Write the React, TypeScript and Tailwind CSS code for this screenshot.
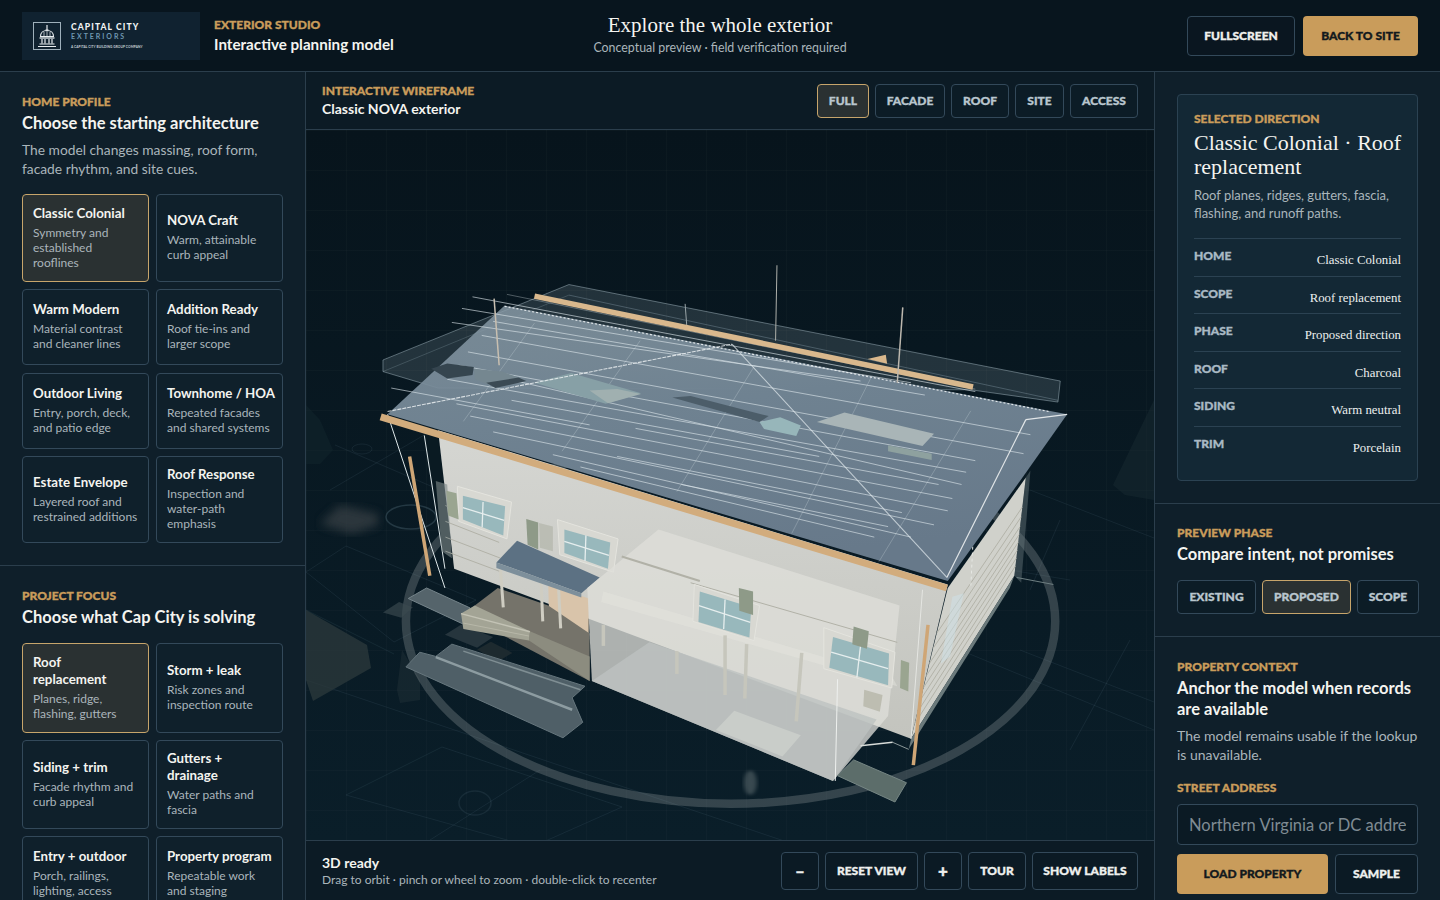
import type { ReactNode } from 'react'

const profiles = [
  { title: 'Classic Colonial', desc: 'Symmetry and established rooflines', active: true, h: 'h-[88px]' },
  { title: 'NOVA Craft', desc: 'Warm, attainable curb appeal', h: 'h-[88px]' },
  { title: 'Warm Modern', desc: 'Material contrast and cleaner lines', h: 'h-[76px]' },
  { title: 'Addition Ready', desc: 'Roof tie-ins and larger scope', h: 'h-[76px]' },
  { title: 'Outdoor Living', desc: 'Entry, porch, deck, and patio edge', h: 'h-[76px]' },
  { title: 'Townhome / HOA', desc: 'Repeated facades and shared systems', h: 'h-[76px]' },
  { title: 'Estate Envelope', desc: 'Layered roof and restrained additions', h: 'h-[87px]' },
  { title: 'Roof Response', desc: 'Inspection and water-path emphasis', h: 'h-[87px]' },
]

const focuses = [
  { title: 'Roof\nreplacement', desc: 'Planes, ridge, flashing, gutters', active: true, h: 'h-[90px]' },
  { title: 'Storm + leak', desc: 'Risk zones and inspection route', h: 'h-[90px]' },
  { title: 'Siding + trim', desc: 'Facade rhythm and curb appeal', h: 'h-[89px]' },
  { title: 'Gutters +\ndrainage', desc: 'Water paths and fascia', h: 'h-[89px]' },
  { title: 'Entry + outdoor', desc: 'Porch, railings, lighting, access', h: 'h-[76px]' },
  { title: 'Property program', desc: 'Repeatable work and staging', h: 'h-[76px]' },
]

const specs = [
  ['HOME', 'Classic Colonial'],
  ['SCOPE', 'Roof replacement'],
  ['PHASE', 'Proposed direction'],
  ['ROOF', 'Charcoal'],
  ['SIDING', 'Warm neutral'],
  ['TRIM', 'Porcelain'],
]

const heavy = 'font-black [-webkit-text-stroke:0.35px_currentColor]'

function Eyebrow({ children }: { children: ReactNode }) {
  return <div className={`text-[12px] leading-[15px] text-[#c99c5b] uppercase ${heavy}`}>{children}</div>
}

function OptionCard({ title, desc, active, h }: { title: string; desc: string; active?: boolean; h: string }) {
  return (
    <div
      className={`${h} flex flex-col justify-center rounded border pr-[7px] pb-[2px] pl-[10px] ${
        active ? 'border-[#c7a56b] bg-[#2a3132]' : 'border-[#33495a] bg-[#0f202b]'
      }`}
    >
      <div className="text-[13.300px] leading-[17px] font-bold whitespace-pre text-[#f4f4f0]">{title}</div>
      <div className="mt-[3px] text-[12px] leading-[15px] text-[#aab5bb]">{desc}</div>
    </div>
  )
}

function ToolButton({ children, active, className = '' }: { children: ReactNode; active?: boolean; className?: string }) {
  return (
    <div
      className={`flex h-[34px] shrink-0 items-center justify-center rounded border text-[12px] ${heavy} ${
        active ? 'border-[#c7a56b] bg-[#2a3132]' : 'border-[#33495a] bg-[#0c1c26]'
      } text-[#b9c6ce] ${className}`}
    >
      {children}
    </div>
  )
}

function BottomButton({ children, className = '' }: { children: ReactNode; className?: string }) {
  return (
    <div className={`flex h-[38px] items-center justify-center rounded border border-[#33495a] bg-[#0b1a24] text-[12px] text-[#eef0ee] ${heavy} ${className}`}>
      {children}
    </div>
  )
}

function Logo() {
  return (
    <div className="flex h-[48px] w-[178px] items-center gap-[10px] bg-[#102230] pl-[11px]">
      <svg width="28" height="28" viewBox="0 0 28 28" fill="none" stroke="#e8edf0" className="shrink-0">
        <rect x="0.5" y="0.5" width="27" height="27" stroke="#9fb0bb" />
        <path d="M14 3v5" strokeWidth="1.2" />
        <path d="M12.500 8h3" strokeWidth="1" />
        <path d="M7.500 14.500C7.500 11 10 8.500 14 8.500s6.500 2.500 6.500 6z" strokeWidth="1.100" />
        <path d="M11 14V10M14 14V9M17 14V10" strokeWidth="0.700" />
        <path d="M6.500 16h15" strokeWidth="1.300" />
        <path d="M9 17v4.500M12 17v4.500M16 17v4.500M19 17v4.500" strokeWidth="1.200" />
        <path d="M6.500 22h15M5 24.500h18" strokeWidth="1.100" />
      </svg>
      <div>
        <div className="text-[8.500px] leading-[10px] font-black tracking-[0.13em] text-[#f2f4f4]">CAPITAL CITY</div>
        <div className="text-[7px] leading-[9px] font-bold tracking-[0.28em] text-[#6f97b0]">EXTERIORS</div>
        <div className="mt-[4px] text-[3.200px] leading-[5px] font-bold tracking-[0.03em] whitespace-nowrap text-[#c9d2d8]">A CAPITAL CITY BUILDING GROUP COMPANY</div>
      </div>
    </div>
  )
}

const poly = (points: string, fill: string, stroke = 'none', sw = 1) => (
  <polygon points={points} fill={fill} stroke={stroke} strokeWidth={sw} vectorEffect="non-scaling-stroke" />
)

const seg = (a: number[], stroke: string, sw = 1, dash?: string) => (
  <line x1={a[0]} y1={a[1]} x2={a[2]} y2={a[3]} stroke={stroke} strokeWidth={sw} strokeDasharray={dash} vectorEffect="non-scaling-stroke" />
)

// roof courses, [start x, start y, end x, end y] in the house's own drawing space
const roofLines = [
  [245, 105, 1340, 375],
  [222, 138, 1200, 350],
  [200, 178, 1090, 345],
  [290, 175, 1230, 385],
  [265, 215, 1460, 498],
  [235, 262, 1445, 552],
  [68, 365, 500, 470],
  [215, 300, 1340, 572],
  [190, 340, 1320, 605],
  [340, 345, 1310, 640],
  [210, 410, 1290, 680],
  [240, 445, 1280, 715],
  [290, 490, 1250, 755],
  [420, 555, 1200, 790],
  [480, 590, 1120, 790],
  [330, 400, 1000, 560],
  [600, 480, 1260, 640],
  [560, 560, 1180, 720],
  [700, 640, 1150, 760],
]

const roofRibs = [
  [225, 460, 380, 180],
  [440, 545, 610, 230],
  [690, 660, 860, 300],
  [940, 780, 1115, 330],
  [1130, 860, 1330, 430],
]

// siding courses on the far wall, as a share of its height
const farCourses = [0.3, 0.4, 0.5, 0.58, 0.66, 0.74, 0.82, 0.9]

function Window({ frame, glass, cross }: { frame: string; glass: string; cross: number[][] }) {
  return (
    <>
      {poly(frame, '#d8d8d2', '#e4e4de', 1)}
      {poly(glass, '#98b8bc')}
      {cross.map((c, i) => (
        <g key={i}>{seg(c, '#e6eeee', 1.300)}</g>
      ))}
    </>
  )
}

function House() {
  return (
    <svg className="absolute inset-0 h-full w-full" viewBox="306 130 848 710" preserveAspectRatio="none">
      <defs>
        <filter id="soft">
          <feGaussianBlur stdDeviation="5" />
        </filter>
        <linearGradient id="roofFill" x1="0" y1="0" x2="0.3" y2="1">
          <stop offset="0" stopColor="#8fa1ad" stopOpacity="0.78" />
          <stop offset="0.45" stopColor="#6f8291" />
          <stop offset="1" stopColor="#67798a" />
        </linearGradient>
        <linearGradient id="wallFill" x1="0" y1="0" x2="0" y2="1">
          <stop offset="0" stopColor="#d5d6d2" />
          <stop offset="1" stopColor="#c3c4be" />
        </linearGradient>
      </defs>

      {/* faint site plan */}
      <g fill="none" stroke="#8fb4c4" strokeOpacity="0.09">
        <ellipse cx="411" cy="517" rx="25" ry="12" strokeOpacity="0.2" strokeWidth="1.500" />
        <ellipse cx="475" cy="803" rx="16" ry="12" strokeOpacity="0.1" strokeWidth="1.500" />
        <ellipse cx="362" cy="449" rx="10" ry="5" />
        <path d="M306 572l40-26 130 54-82 42zM306 610l88 44" />
        <path d="M346 795l96-48 180 60-90 40z" />
        <path d="M335 445l140 60M330 490l120-70M306 680L900 880M1020 650l134 52M1030 490l124 48M1060 520l-30 70" />
        <path d="M1010 570l60 10M960 650l194 80M1130 640l-60 110M430 840l110-70" />
      </g>
      <polygon points="320,524 340,505 378,514 378,525 352,534" fill="#3b4347" filter="url(#soft)" opacity="0.7" />
      <polygon points="306,610 367,645 371,668 313,701 306,680" fill="#2c3a3c" opacity="0.75" />
      <polygon points="306,405 320,420 333,450 320,464 306,464" fill="#15282f" opacity="0.45" />
      <polygon points="1154,400 1113,485 1125,495 1154,500" fill="#1a2c33" opacity="0.45" />
      <polygon points="402,650 420,680 420,700 400,703 397,690" fill="#24343a" opacity="0.45" />

      <g transform="matrix(.4592 0 0 .3508 360 260)">
        <ellipse cx="807" cy="1030" rx="707" ry="520" fill="none" stroke="#a5aeac" strokeOpacity="0.28" strokeWidth="8.500" vectorEffect="non-scaling-stroke" />
        <ellipse cx="850" cy="1490" rx="14" ry="35" fill="#a5aeac" opacity="0.3" filter="url(#soft)" />
        {poly('50,285 50,318 170,365 1330,370 1520,405 1525,345 455,70', '#c3d6e026', '#c3d6e066')}
        {seg([50, 318, 455, 100], '#b9d0dc33')}
        {seg([455, 100, 1520, 400], '#b9d0dc44')}
        {seg([320, 98, 1340, 368], '#dbe3e655')}
        {seg([708, 125, 712, 195], '#9aa5a8')}

        {/* left ghost wall */}
        {poly('140,495 170,510 210,885 185,880', '#0a1a22')}
        {seg([60, 440, 185, 935], '#dfe8ea', 1)}
        {seg([140, 500, 185, 880], '#dfe8ea', 1)}

        {/* walkway slabs */}
        {poly('105,965 145,935 240,992 225,1038', '#55646b', '#75848a')}
        {poly('50,1005 85,975 115,990 90,1020', '#3b4a50aa')}
        {poly('185,1068 220,1040 290,1075 255,1105', '#26353d')}
        {poly('255,1110 285,1088 332,1120 300,1145', '#1d2a2f')}
        {poly('200,1095 490,1215 462,1248 485,1318 442,1362 100,1160 130,1118 165,1130', '#4f5f67', '#66767d')}
        {seg([165, 1132, 462, 1282], '#8d9ca1', 2.500)}
        {seg([225, 1115, 480, 1225], '#7f8e93', 1.500)}

        {/* far wall */}
        {poly('1280,935 1450,620 1425,900 1200,1365', '#d0d1cb')}
        {poly('1200,1365 1425,900 1415,935 1195,1395', '#6b7a7c')}
        {farCourses.map((t) => (
          <g key={t}>{seg([1280 - 80 * t, 935 + 430 * t, 1450 - 25 * t, 620 + 280 * t], '#b3b3a9', 1)}</g>
        ))}
        {poly('1290,960 1315,950 1285,1130 1265,1150', '#cfe1e688')}
        {poly('1450,620 1460,600 1440,920 1425,900', '#67757a77')}
        {seg([1335, 800, 1330, 935], '#e6e8e4', 1, '3 3')}
        {seg([1430, 905, 1510, 925], '#6f7f82', 1)}

        {/* front wall */}
        {poly('170,485 1280,925 1200,1365 205,880', 'url(#wallFill)')}
        {[700, 745, 790, 830].map((y, i) => (
          <g key={y}>{seg([186, y, 300 + i * 3, y + 60], '#b2b2a8', 1)}</g>
        ))}
        {poly('165,630 190,640 200,850 178,830', '#7f8a8b99')}

        <Window
          frame="212,645 330,690 320,795 215,745"
          glass="224,672 316,702 312,785 224,740"
          cross={[[268, 690, 266, 762], [224, 706, 314, 742]]}
        />
        <Window
          frame="430,740 562,795 552,890 435,840"
          glass="445,768 545,805 540,880 445,835"
          cross={[[492, 785, 490, 858], [445, 802, 542, 842]]}
        />
        {poly('188,658 210,665 215,740 192,728', '#9aa590')}
        {poly('362,738 388,748 388,825 365,812', '#8e9a88')}
        {poly('390,750 420,760 420,830 392,820', '#a8ada088')}

        {/* entry */}
        {poly('410,925 498,965 498,1068 412,1032', '#d9c4aa')}
        {poly('300,935 410,985 500,1065 500,1200 225,1010', '#75736a')}
        {poly('370,1058 500,1130 500,1200 368,1085', '#8c8c7f')}
        {poly('220,1008 250,985 370,1058 368,1085 225,1052', '#a3a495')}
        {seg([225, 1035, 368, 1072], '#b7b7a8', 1)}
        {seg([220, 1008, 370, 1060], '#c3c3b5', 1.500)}
        {[[305, 865, 312, 990], [394, 905, 398, 1030], [432, 925, 437, 1050]].map((p) => (
          <g key={p[0]}>{seg(p, '#cfcdc2', 3)}</g>
        ))}
        {poly('297,862 342,800 522,905 482,950', '#5c7183')}
        {poly('297,862 482,950 482,962 297,878', '#7d8f9b')}

        {/* translucent addition */}
        {poly('495,935 650,768 1175,985 1150,1300 1030,1485 505,1200', '#dedfd9c4')}
        {poly('505,1200 630,1090 1125,1310 1030,1485', '#bdc2c0cc')}
        {poly('775,1340 815,1285 960,1355 920,1415', '#c9cdc9')}
        {poly('530,945 1160,1190 1170,1215 525,975', '#e5e5df77')}
        {seg([720, 920, 1170, 1090], '#b1b1a7', 1)}
        {seg([570, 845, 740, 915], '#b1b1a7', 2)}

        <Window
          frame="728,925 870,985 858,1085 725,1030"
          glass="740,945 852,990 848,1076 737,1032"
          cross={[[795, 968, 792, 1052], [738, 985, 850, 1033]]}
        />
        <Window
          frame="1010,1048 1165,1118 1158,1220 1010,1165"
          glass="1030,1075 1152,1122 1150,1212 1022,1162"
          cross={[[1090, 1100, 1082, 1190], [1026, 1118, 1150, 1165]]}
        />
        {poly('825,935 856,945 856,1012 826,1000', '#8e9a88')}
        {poly('1075,1045 1108,1058 1104,1108 1072,1095', '#8e9a88')}
        {poly('1178,1140 1196,1148 1194,1230 1176,1220', '#9aa590')}
        {poly('1098,1225 1138,1240 1132,1288 1096,1272', '#bdbdb1')}

        {[[530, 1040, 530, 1100], [690, 1115, 690, 1180], [795, 1070, 795, 1240], [842, 1095, 838, 1250], [962, 1120, 950, 1315]].map((p) => (
          <g key={p[0]}>{seg(p, '#c6c6bc', 3.500)}</g>
        ))}
        {seg([1040, 1195, 1035, 1485], '#eef0ee', 1)}
        {seg([1225, 940, 1200, 1365], '#e5e6e2', 1)}
        {seg([1090, 1385, 1160, 1375], '#d8dcd9', 1.500)}
        {seg([1160, 1375, 1195, 1395], '#8b9798', 1)}
        {poly('1040,1470 1075,1425 1190,1490 1165,1545', '#5c6d6a', '#768684')}

        {/* roof */}
        {poly('60,440 315,130 1540,440 1440,625 1280,915', 'url(#roofFill)')}
        {roofRibs.map((r) => (
          <g key={r[0]}>{seg(r, '#d5e0e544', 1)}</g>
        ))}
        {roofLines.map((r) => (
          <g key={r[1]}>{seg(r, '#dce6eaa0', 1)}</g>
        ))}
        {poly('155,310 190,295 248,305 245,328 190,338', '#35454f')}
        {poly('248,310 310,318 345,335 290,360 250,340', '#758790')}
        {poly('275,350 345,335 362,345 295,365', '#3b4a54')}
        {poly('380,350 460,322 612,380 535,410', '#87a0a6')}
        {poly('500,372 560,368 612,382 540,408', '#a0b0b0')}
        {poly('680,392 720,388 890,445 870,462', '#4c5d69')}
        {poly('870,462 915,448 960,472 950,502 880,482', '#97b6ba')}
        {poly('995,462 1055,435 1250,495 1225,530', '#a9b5b7')}
        {poly('1150,528 1245,552 1245,570 1150,545', '#8ea19f')}
        {seg([315, 132, 1500, 432], '#f1f5f6dd', 1.200, '2 2')}
        {seg([60, 432, 810, 240], '#f1f5f6cc', 1.100, '4 1')}
        {seg([810, 240, 1278, 905], '#dfe8ecbb', 1.100)}
        {seg([1450, 455, 1278, 905], '#f4f6f6dd', 1.200)}
        {seg([1450, 455, 1540, 440], '#f4f6f6dd', 1.200)}

        {/* trim and downspouts */}
        {seg([45, 447, 1278, 935], '#d2ac7d', 7)}
        {seg([380, 103, 1335, 362], '#d9b88d', 5.500)}
        {poly('1105,282 1145,270 1148,296', '#d9b88d')}
        {seg([108, 560, 152, 900], '#cfa676', 3.500)}
        {seg([1237, 1040, 1205, 1440], '#cfa676', 3.500)}
        {seg([908, 15, 905, 230], '#aeb0aa', 1)}
        {seg([1182, 135, 1170, 350], '#bdb8ae', 1.500)}
        {seg([292, 110, 303, 300], '#c8bfb0', 1.500)}
      </g>
    </svg>
  )
}

export default function App() {
  return (
    <div className="flex h-[900px] w-[1440px] flex-col overflow-hidden bg-[#0f1f2a] [font-family:Lato,sans-serif] text-white">
      <header className="grid h-[72px] shrink-0 grid-cols-[1fr_auto_1fr] items-center border-b border-[#2b3e4c] bg-[#08151e] px-[22px]">
        <div className="flex items-center">
          <Logo />
          <div className="ml-[14px]">
            <Eyebrow>Exterior Studio</Eyebrow>
            <div className="mt-[2px] text-[15.200px] leading-[20px] font-bold whitespace-nowrap text-[#f4f4f0]">Interactive planning model</div>
          </div>
        </div>
        <div className="pb-[4px] text-center">
          <div className="[font-family:'Liberation_Serif',serif] text-[21px] leading-[26px] text-[#f4f4f0]">Explore the whole exterior</div>
          <div className="mt-[2px] text-[12.400px] leading-[16px] text-[#aab5bb]">Conceptual preview · field verification required</div>
        </div>
        <div className="flex justify-end gap-2">
          <div className={`flex h-[40px] w-[108px] items-center justify-center rounded border border-[#33495a] bg-[#0a1620] text-[12px] text-[#f0f0ec] ${heavy}`}>FULLSCREEN</div>
          <div className={`flex h-[40px] w-[115px] items-center justify-center rounded bg-[#c99c5b] text-[12px] text-[#13191d] ${heavy}`}>BACK TO SITE</div>
        </div>
      </header>

      <div className="flex min-h-0 flex-1">
        <aside className="w-[306px] shrink-0 overflow-hidden border-r border-[#2b3e4c]">
          <section className="border-b border-[#2b3e4c] p-[22px]">
            <Eyebrow>Home Profile</Eyebrow>
            <h2 className="mt-[3px] text-[16.500px] leading-[22px] font-bold text-[#f4f4f0]">Choose the starting architecture</h2>
            <p className="mt-[6px] mb-[16px] text-[13.800px] leading-[19px] text-[#aab5bb]">The model changes massing, roof form, facade rhythm, and site cues.</p>
            <div className="grid grid-cols-2 gap-x-[7px] gap-y-[7.400px]">
              {profiles.map((p) => (
                <OptionCard key={p.title} {...p} />
              ))}
            </div>
          </section>
          <section className="px-[22px] pt-[22px]">
            <Eyebrow>Project Focus</Eyebrow>
            <h2 className="mt-[3px] mb-[15px] text-[16.500px] leading-[22px] font-bold text-[#f4f4f0]">Choose what Cap City is solving</h2>
            <div className="grid grid-cols-2 gap-[7px]">
              {focuses.map((p) => (
                <OptionCard key={p.title} {...p} />
              ))}
            </div>
          </section>
        </aside>

        <main className="flex min-w-0 flex-1 flex-col">
          <div className="flex h-[58px] shrink-0 items-center justify-between border-b border-[#2b3e4c] bg-[#0c1b25] px-[16px]">
            <div>
              <Eyebrow>Interactive Wireframe</Eyebrow>
              <div className="mt-[1px] text-[14px] leading-[20px] font-bold text-[#f4f4f0]">Classic NOVA exterior</div>
            </div>
            <div className="flex gap-[6px]">
              <ToolButton active className="w-[52px]">FULL</ToolButton>
              <ToolButton className="w-[70px]">FACADE</ToolButton>
              <ToolButton className="w-[58px]">ROOF</ToolButton>
              <ToolButton className="w-[49px]">SITE</ToolButton>
              <ToolButton className="w-[68px]">ACCESS</ToolButton>
            </div>
          </div>
          <div className="relative min-h-0 flex-1 overflow-hidden bg-[linear-gradient(#ffffff05_1px,transparent_1px),linear-gradient(90deg,#ffffff05_1px,transparent_1px),linear-gradient(180deg,#07141c,#0a1e29)] bg-[size:40px_40px,40px_40px,100%_100%]">
            <House />
          </div>
          <div className="flex h-[60px] shrink-0 items-center justify-between border-t border-[#2b3e4c] bg-[#0c1b25] px-[16px]">
            <div>
              <div className="text-[14px] leading-[18px] font-bold text-[#f4f4f0]">3D ready</div>
              <div className="text-[12px] leading-[16px] text-[#aab5bb]">Drag to orbit · pinch or wheel to zoom · double-click to recenter</div>
            </div>
            <div className="flex gap-[6px]">
              <BottomButton className="w-[38px] text-[17px]">–</BottomButton>
              <BottomButton className="w-[93px]">RESET VIEW</BottomButton>
              <BottomButton className="w-[38px] text-[17px]">+</BottomButton>
              <BottomButton className="w-[58px]">TOUR</BottomButton>
              <BottomButton className="w-[106px]">SHOW LABELS</BottomButton>
            </div>
          </div>
        </main>

        <aside className="w-[286px] shrink-0 overflow-hidden border-l border-[#2b3e4c]">
          <section className="border-b border-[#2b3e4c] p-[22px]">
            <div className="h-[387px] rounded border border-[#2b4252] bg-[#132835] px-[16px] pt-[16px]">
              <Eyebrow>Selected Direction</Eyebrow>
              <h3 className="mt-[5px] [font-family:'Liberation_Serif',serif] text-[22px] leading-[24px] whitespace-nowrap text-[#f4f4f0]">
                Classic Colonial · Roof
                <br />
                replacement
              </h3>
              <p className="mt-[7px] mb-[16px] text-[13px] leading-[18px] text-[#aab5bb]">Roof planes, ridges, gutters, fascia, flashing, and runoff paths.</p>
              {specs.map(([label, value]) => (
                <div key={label} className="flex h-[37.500px] justify-between border-t border-[#2b4252]">
                  <span className={`pt-[9px] text-[12px] leading-[15px] text-[#a9b9c4] ${heavy}`}>{label}</span>
                  <span className="pt-[13px] [font-family:'Liberation_Serif',serif] text-[12.800px] leading-[16px] text-[#ecefee]">{value}</span>
                </div>
              ))}
            </div>
          </section>
          <section className="border-b border-[#2b3e4c] px-[22px] pt-[21px] pb-[22px]">
            <Eyebrow>Preview Phase</Eyebrow>
            <h2 className="mt-[3px] mb-[15px] text-[16.500px] leading-[22px] font-bold text-[#f4f4f0]">Compare intent, not promises</h2>
            <div className="flex gap-[6px]">
              <ToolButton className="w-[79px]">EXISTING</ToolButton>
              <ToolButton active className="w-[89px]">PROPOSED</ToolButton>
              <ToolButton className="w-[62px]">SCOPE</ToolButton>
            </div>
          </section>
          <section className="px-[22px] pt-[22px]">
            <Eyebrow>Property Context</Eyebrow>
            <h2 className="mt-[4px] text-[16.500px] leading-[21px] font-bold text-[#f4f4f0]">Anchor the model when records are available</h2>
            <p className="mt-[6px] mb-[16px] text-[14px] leading-[19px] text-[#aab5bb]">The model remains usable if the lookup is unavailable.</p>
            <Eyebrow>Street Address</Eyebrow>
            <input
              readOnly
              placeholder="Northern Virginia or DC address"
              className="mt-[9px] h-[41px] w-full rounded border border-[#33495a] bg-[#0b1a24] px-[11px] text-[16.500px] outline-none placeholder:text-[#7f8b93]"
            />
            <div className="mt-[9px] flex gap-[7px]">
              <div className={`flex h-[40px] w-[151px] items-center justify-center rounded bg-[#c99c5b] text-[12px] text-[#13191d] ${heavy}`}>LOAD PROPERTY</div>
              <BottomButton className="h-[40px] w-[83px]">SAMPLE</BottomButton>
            </div>
          </section>
        </aside>
      </div>
    </div>
  )
}
